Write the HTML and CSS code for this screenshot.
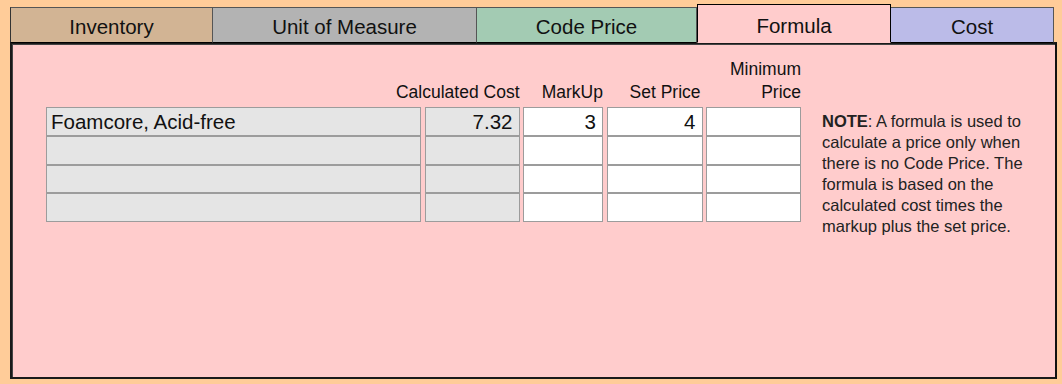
FILE: index.html
```html
<!DOCTYPE html>
<html>
<head>
<meta charset="utf-8">
<link rel="stylesheet" href="styles.css">
</head>
<body>
<div class="wrap">
  <div class="tabs">
    <div class="tab tab-inv">Inventory</div>
    <div class="tab tab-uom">Unit of Measure</div>
    <div class="tab tab-code">Code Price</div>
    <div class="tab tab-formula active">Formula</div>
    <div class="tab tab-cost">Cost</div>
  </div>
  <div class="panel">
    <div class="grid">
      <div class="hdr"></div>
      <div class="hdr hdr-wide"><span>Calculated Cost</span></div>
      <div class="hdr">MarkUp</div>
      <div class="hdr hdr-set">Set Price</div>
      <div class="hdr">Minimum<br>Price</div>

      <div class="cell ro left">Foamcore, Acid-free</div>
      <div class="cell ro">7.32</div>
      <div class="cell">3</div>
      <div class="cell">4</div>
      <div class="cell"></div>

      <div class="cell ro left"></div>
      <div class="cell ro"></div>
      <div class="cell"></div>
      <div class="cell"></div>
      <div class="cell"></div>

      <div class="cell ro left"></div>
      <div class="cell ro"></div>
      <div class="cell"></div>
      <div class="cell"></div>
      <div class="cell"></div>

      <div class="cell ro left"></div>
      <div class="cell ro"></div>
      <div class="cell"></div>
      <div class="cell"></div>
      <div class="cell"></div>
    </div>
    <p class="note"><b>NOTE</b>: A formula is used to calculate a price only when there is no Code Price. The formula is based on the calculated cost times the markup plus the set price.</p>
  </div>
</div>
</body>
</html>
```

FILE: styles.css
```css
html, body {
  margin: 0;
  padding: 0;
  background: #FFCC99;
  font-family: "Liberation Sans", Arial, sans-serif;
  color: #111;
}

.wrap {
  padding: 4px 0 0 10px;
  width: 1047px;
}

.tabs {
  display: flex;
  align-items: flex-end;
  height: 39px;
  margin-bottom: -1px;
  position: relative;
  z-index: 1;
}

.tab {
  box-sizing: border-box;
  height: 36px;
  border: 1px solid #555;
  border-bottom-color: #000;
  border-left-width: 0;
  font-size: 20.5px;
  display: flex;
  align-items: center;
  justify-content: center;
  padding-top: 3px;
}

.tab-inv { width: 203px; background: #D2B494; border-left: 1px solid #333; }
.tab-uom { width: 264px; background: #B3B3B3; }
.tab-code { width: 220px; background: #A3CBB3; }
.tab-formula { width: 194px; }
.tab-cost { width: 163px; background: #BBBBE8; border-left-width: 0; }

.tab.active {
  height: 39px;
  background: #FFCCCC;
  border: 1px solid #000;
  border-bottom-color: #FFCCCC;
  padding-top: 5px;
}

.panel {
  box-sizing: border-box;
  height: 337px;
  background: #FFCCCC;
  border: 2px solid #1a1a1a;
  border-right-color: #111;
  box-shadow: inset 1px 1px 0 #444;
  padding: 17px 0 0 34px;
  display: flex;
  align-items: flex-start;
}

.grid {
  display: grid;
  grid-template-columns: 375px 95px 80px 96px 95px;
  grid-template-rows: 46px repeat(4, 28.75px);
  column-gap: 3.5px;
}

.hdr {
  font-size: 17.5px;
  line-height: 23px;
  text-align: right;
  align-self: end;
  margin-bottom: 3px;
  white-space: nowrap;
}

.hdr-wide {
  display: flex;
  justify-content: flex-end;
}

.hdr-wide span {
  flex: none;
}

.hdr-set { padding-right: 2px; }

.cell {
  box-sizing: border-box;
  background: #fff;
  border: 1px solid #9c9c9c;
  font-size: 20.5px;
  line-height: 27px;
  text-align: right;
  padding: 0 6px 0 4px;
}

.cell.ro { background: #E5E5E5; }
.cell.left { text-align: left; }

.note {
  margin: 50px 0 0 21px;
  width: 212px;
  font-size: 16.5px;
  line-height: 21px;
  color: #222;
}
```
